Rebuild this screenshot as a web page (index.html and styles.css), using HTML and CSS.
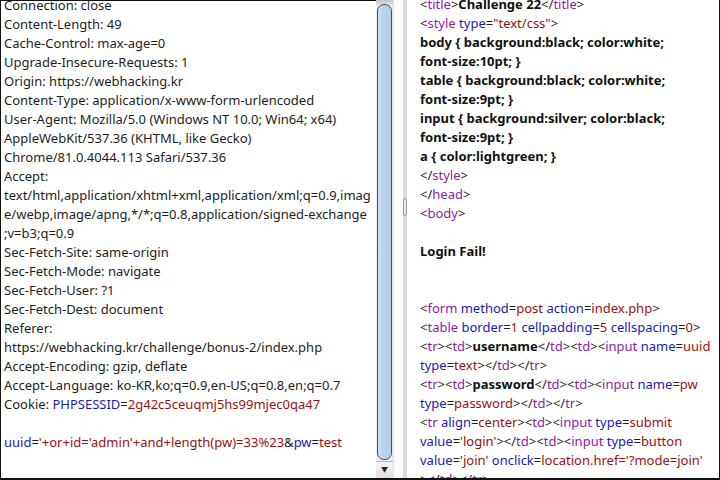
FILE: index.html
```html
<!DOCTYPE html>
<html lang="en">
<head>
    <meta charset="UTF-8">
    <title>Burp - Request / Response</title>
    <link rel="stylesheet" href="styles.css">
</head>
<body>

    <div class="frame">
        <!-- request editor -->
        <div class="pane request">
            <div class="lines">
                <div class="line">Connection: close</div>
                <div class="line">Content-Length: 49</div>
                <div class="line">Cache-Control: max-age=0</div>
                <div class="line">Upgrade-Insecure-Requests: 1</div>
                <div class="line">Origin: https://webhacking.kr</div>
                <div class="line">Content-Type: application/x-www-form-urlencoded</div>
                <div class="line">User-Agent: Mozilla/5.0 (Windows NT 10.0; Win64; x64)</div>
                <div class="line">AppleWebKit/537.36 (KHTML, like Gecko)</div>
                <div class="line">Chrome/81.0.4044.113 Safari/537.36</div>
                <div class="line">Accept:</div>
                <div class="line">text/html,application/xhtml+xml,application/xml;q=0.9,imag</div>
                <div class="line">e/webp,image/apng,*/*;q=0.8,application/signed-exchange</div>
                <div class="line">;v=b3;q=0.9</div>
                <div class="line">Sec-Fetch-Site: same-origin</div>
                <div class="line">Sec-Fetch-Mode: navigate</div>
                <div class="line">Sec-Fetch-User: ?1</div>
                <div class="line">Sec-Fetch-Dest: document</div>
                <div class="line">Referer:</div>
                <div class="line">https://webhacking.kr/challenge/bonus-2/index.php</div>
                <div class="line">Accept-Encoding: gzip, deflate</div>
                <div class="line">Accept-Language: ko-KR,ko;q=0.9,en-US;q=0.8,en;q=0.7</div>
                <div class="line">Cookie: <span class="name">PHPSESSID</span>=<span class="val">2g42c5ceuqmj5hs99mjec0qa47</span></div>
                <div class="line"></div>
                <div class="line"><span class="name">uuid</span>=<span class="val">'+or+id='admin'+and+length(pw)=33%23</span>&amp;<span class="name">pw</span>=<span class="val">test</span></div>
            </div>
        </div>

        <!-- request scrollbar -->
        <div class="vscroll">
            <div class="thumb"></div>
            <div class="arrow">&#9660;</div>
        </div>

        <div class="gap"></div>

        <!-- splitter between request and response -->
        <div class="splitter">
            <div class="grip"></div>
        </div>

        <!-- response editor -->
        <div class="pane response">
            <div class="lines">
                <div class="line">&lt;<span class="tag">title</span>&gt;<b>Challenge 22</b>&lt;/<span class="tag">title</span>&gt;</div>
                <div class="line">&lt;<span class="tag">style</span> <span class="name">type</span>=<span class="val">"text/css"</span>&gt;</div>
                <div class="line"><b>body { background:black; color:white;</b></div>
                <div class="line"><b>font-size:10pt; }</b></div>
                <div class="line"><b>table { background:black; color:white;</b></div>
                <div class="line"><b>font-size:9pt; }</b></div>
                <div class="line"><b>input { background:silver; color:black;</b></div>
                <div class="line"><b>font-size:9pt; }</b></div>
                <div class="line"><b>a { color:lightgreen; }</b></div>
                <div class="line">&lt;/<span class="tag">style</span>&gt;</div>
                <div class="line">&lt;/<span class="tag">head</span>&gt;</div>
                <div class="line">&lt;<span class="tag">body</span>&gt;</div>
                <div class="line"></div>
                <div class="line"><b>Login Fail!</b></div>
                <div class="line"></div>
                <div class="line"></div>
                <div class="line">&lt;<span class="tag">form</span> <span class="name">method</span>=<span class="val">post</span> <span class="name">action</span>=<span class="val">index.php</span>&gt;</div>
                <div class="line">&lt;<span class="tag">table</span> <span class="name">border</span>=<span class="val">1</span> <span class="name">cellpadding</span>=<span class="val">5</span> <span class="name">cellspacing</span>=<span class="val">0</span>&gt;</div>
                <div class="line">&lt;<span class="tag">tr</span>&gt;&lt;<span class="tag">td</span>&gt;<b>username</b>&lt;/<span class="tag">td</span>&gt;&lt;<span class="tag">td</span>&gt;&lt;<span class="tag">input</span> <span class="name">name</span>=<span class="val">uuid</span></div>
                <div class="line"><span class="name">type</span>=<span class="val">text</span>&gt;&lt;/<span class="tag">td</span>&gt;&lt;/<span class="tag">tr</span>&gt;</div>
                <div class="line">&lt;<span class="tag">tr</span>&gt;&lt;<span class="tag">td</span>&gt;<b>password</b>&lt;/<span class="tag">td</span>&gt;&lt;<span class="tag">td</span>&gt;&lt;<span class="tag">input</span> <span class="name">name</span>=<span class="val">pw</span></div>
                <div class="line"><span class="name">type</span>=<span class="val">password</span>&gt;&lt;/<span class="tag">td</span>&gt;&lt;/<span class="tag">tr</span>&gt;</div>
                <div class="line">&lt;<span class="tag">tr</span> <span class="name">align</span>=<span class="val">center</span>&gt;&lt;<span class="tag">td</span>&gt;&lt;<span class="tag">input</span> <span class="name">type</span>=<span class="val">submit</span></div>
                <div class="line"><span class="name">value</span>=<span class="val">'login'</span>&gt;&lt;/<span class="tag">td</span>&gt;&lt;<span class="tag">td</span>&gt;&lt;<span class="tag">input</span> <span class="name">type</span>=<span class="val">button</span></div>
                <div class="line"><span class="name">value</span>=<span class="val">'join'</span> <span class="name">onclick</span>=<span class="val">location.href='?mode=join'</span></div>
                <div class="line">&gt;&lt;/<span class="tag">td</span>&gt;&lt;/<span class="tag">tr</span>&gt;</div>
            </div>
        </div>
    </div>

</body>
</html>
```

FILE: styles.css
```css
body {
    margin: 0;
    background-color: #ffffff;
    font-family: "Noto Sans", "Noto Sans CJK KR", sans-serif;
    font-size: 13px;
    color: #1e1e1e;
}
.frame {
    display: flex;
    width: 720px;
    height: 480px;
    box-sizing: border-box;
    border-bottom: 2px solid #111;
    overflow: hidden;
}
.pane {
    overflow: hidden;
    background-color: #ffffff;
}
.request {
    width: 372px;
    padding-left: 3px;
    border-left: 1px solid #111;
    border-top: 1px solid #111;
}
.response {
    flex: 1;
    padding-left: 13px;
    border-right: 1px solid #111;
}
.lines {
    margin-top: -5px;
}
.line {
    height: 19px;
    line-height: 19px;
    white-space: pre;
}
.line b {
    color: #111;
}
.name {
    color: #1a1ab4;
}
.val {
    color: #9a1010;
}
.tag {
    color: #9418a8;
}

/* scrollbar */
.vscroll {
    width: 17px;
    display: flex;
    flex-direction: column;
    background: linear-gradient(#c4c4c4, #ececec 6px, #ececec);
    padding-top: 4px;
    box-sizing: border-box;
}
.thumb {
    flex: 1;
    margin: 0 1px 1px 1px;
    border: 1px solid #3d556e;
    border-radius: 7px;
    background: linear-gradient(to right, #cfe1f2, #bcd3ea 40%, #b4cce6);
}
.arrow {
    height: 16px;
    font-size: 7px;
    line-height: 16px;
    text-align: center;
    color: #222;
    background: linear-gradient(#f6f6f6, #dedede);
    border-top: 1px solid #b8b8b8;
}
.gap {
    width: 9px;
    background-color: #fbfbfb;
    border-left: 1px solid #e4e4e4;
}
.splitter {
    width: 4px;
    background-color: #dadada;
    display: flex;
    justify-content: center;
}
.grip {
    width: 2px;
    height: 16px;
    margin-top: 198px;
    border: 1px solid #9c9c9c;
    border-radius: 2px;
    background-color: #e8e8e8;
}
```
